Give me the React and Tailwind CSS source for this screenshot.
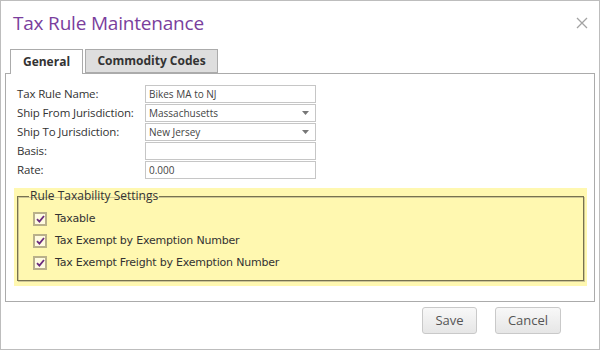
import React from 'react';

const fields = [
  { label: 'Tax Rule Name:', value: 'Bikes MA to NJ' },
  { label: 'Ship From Jurisdiction:', value: 'Massachusetts', select: true },
  { label: 'Ship To Jurisdiction:', value: 'New Jersey', select: true },
  { label: 'Basis:', value: '' },
  { label: 'Rate:', value: '0.000' },
];

const checks = [
  'Taxable',
  'Tax Exempt by Exemption Number',
  'Tax Exempt Freight by Exemption Number',
];

function CheckBox() {
  return (
    <span className="flex items-center justify-center w-[14px] h-[14px] border-2 border-[#b9b08a] bg-[#fffbe0]">
      <svg width="9" height="8" viewBox="0 0 9 8">
        <path d="M1 4.2 L3.4 6.6 L8 1" fill="none" stroke="#6b2c7e" strokeWidth="1.8" />
      </svg>
    </span>
  );
}

export default function App() {
  return (
    <div
      className="w-[600px] h-[350px] border border-[#bdbdbd] bg-white flex flex-col"
      style={{ fontFamily: '"Open Sans", "Liberation Sans", sans-serif' }}
    >
      {/* Title bar */}
      <div className="flex items-center justify-between pl-[12px] pr-[10px] pt-[6px] h-[38px]">
        <h1 className="text-[19px] leading-[24px] text-[#7a3e9d] tracking-[-0.2px]">Tax Rule Maintenance</h1>
        <svg width="12" height="12" viewBox="0 0 12 12" className="mr-[1px]">
          <path d="M1 1 L11 11 M11 1 L1 11" stroke="#a3a3a3" strokeWidth="1.3" />
        </svg>
      </div>

      {/* Tabs */}
      <div className="flex items-end pl-[9px] mt-[9px] gap-[2px] h-[25px]">
        <div className="h-[25px] w-[73px] border border-[#ababab] border-b-0 bg-white flex items-center justify-center text-[12px] font-bold text-[#333] relative top-[1px]">
          General
        </div>
        <div className="h-[24px] w-[133px] border border-[#ababab] bg-[#dedede] flex items-center justify-center text-[12px] font-bold text-[#333]">
          Commodity Codes
        </div>
      </div>

      {/* Panel */}
      <div className="mx-[4px] border border-[#ababab] pt-[11px] pb-[15px]">
        <div className="flex flex-col gap-[1px] pl-[11px]">
          {fields.map((f) => (
            <div key={f.label} className="flex items-center h-[18px]">
              <span className="w-[128px] text-[11.5px] tracking-[-0.15px] text-[#333]">{f.label}</span>
              <div className="w-[171px] h-[18px] border border-[#c6c6c6] bg-white flex items-center justify-between pl-[3px] pr-[6px] text-[10px] text-[#444]">
                <span>{f.value}</span>
                {f.select && (
                  <svg width="7" height="4" viewBox="0 0 7 4">
                    <path d="M0 0 L7 0 L3.5 4 Z" fill="#777" />
                  </svg>
                )}
              </div>
            </div>
          ))}
        </div>

        <div className="ml-[8px] mr-[7px] mt-[9px] bg-[#fff8b0] pt-[1px] pb-[5px] px-[3px]">
          <fieldset className="border border-[#77724f] shadow-[inset_1px_1px_0_#cdc694,1px_1px_0_#cdc694] pl-[15px] pb-[10px]">
            <legend className="ml-[-4px] px-[1px] text-[12px] leading-[14px] text-[#333]">Rule Taxability Settings</legend>
            <div className="flex flex-col gap-[8px] mt-[9px]">
              {checks.map((c) => (
                <label key={c} className="flex items-center gap-[8px] h-[14px] text-[11px] tracking-[-0.2px] text-[#333]" style={{ fontFamily: '"DejaVu Sans", sans-serif' }}>
                  <CheckBox />
                  <span>{c}</span>
                </label>
              ))}
            </div>
          </fieldset>
        </div>
      </div>

      {/* Buttons */}
      <div className="flex justify-end gap-[18px] pr-[38px] mt-[5px]">
        <button className="w-[55px] h-[27px] rounded-[3px] border border-[#c9c9c9] bg-gradient-to-b from-[#f8f8f8] to-[#e6e6e6] text-[13px] text-[#555]">Save</button>
        <button className="w-[66px] h-[27px] rounded-[3px] border border-[#c9c9c9] bg-gradient-to-b from-[#f8f8f8] to-[#e6e6e6] text-[13px] text-[#555]">Cancel</button>
      </div>
    </div>
  );
}
